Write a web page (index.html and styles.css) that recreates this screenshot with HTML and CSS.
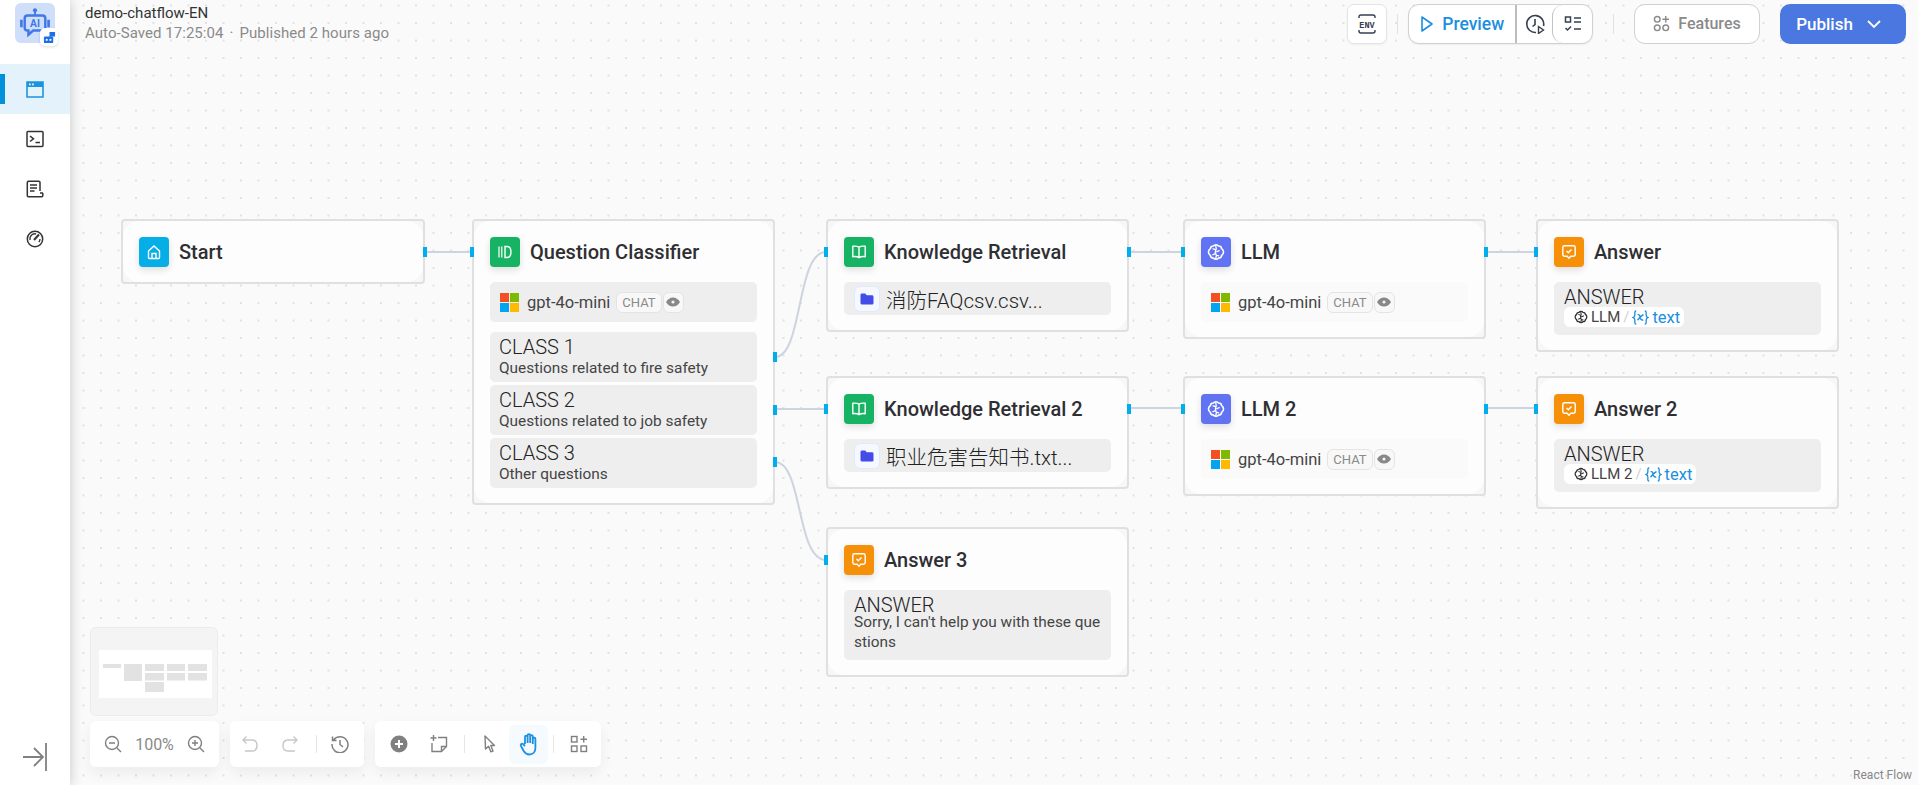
FILE: index.html
```html
<!DOCTYPE html>
<html lang="en">
<head>
    <meta charset="UTF-8">
    <meta name="viewport" content="width=device-width, initial-scale=1.0">
    <title>demo-chatflow-EN</title>
    <link rel="stylesheet" href="styles.css">
</head>
<body>
    <!-- Shared icons -->
    <svg class="icon-defs" xmlns="http://www.w3.org/2000/svg">
        <symbol id="i-ms" viewBox="0 0 19 19">
            <rect width="9" height="9" fill="#f25022"/>
            <rect x="10" width="9" height="9" fill="#7fba00"/>
            <rect y="10" width="9" height="9" fill="#00a4ef"/>
            <rect x="10" y="10" width="9" height="9" fill="#ffb900"/>
        </symbol>
        <symbol id="i-eye" viewBox="0 0 16 16">
            <path d="M1 8c1.800-3 4.200-4.500 7-4.500S13.200 5 15 8c-1.800 3-4.200 4.500-7 4.500S2.800 11 1 8z" fill="#888"/>
            <circle cx="8" cy="8" r="1.600" fill="#f4f4f4"/>
        </symbol>
        <symbol id="i-brain" viewBox="0 0 16 16">
            <path d="M8 1.500c-1 0-1.800.4-2.300 1.100C4.300 2.600 3.100 3.600 3 5 1.900 5.700 1.300 6.700 1.300 8s.6 2.300 1.700 3c.1 1.400 1.300 2.400 2.700 2.400.5.7 1.300 1.100 2.300 1.100s1.800-.4 2.300-1.100c1.400 0 2.600-1 2.700-2.400 1.100-.7 1.700-1.700 1.700-3s-.6-2.300-1.700-3c-.1-1.400-1.300-2.400-2.700-2.400C9.800 1.900 9 1.500 8 1.500z" fill="none" stroke="currentColor" stroke-width="1.400"/>
            <path d="M8 1.800c-.8 1.500.8 2.700 0 4.200s-1 2.500 0 4-.6 2.800 0 4.200M8 6.200L5 5M7.600 9.500L4.800 10.500M8.300 8l2.900-1.500M8.300 11l2.500.5" fill="none" stroke="currentColor" stroke-width="1.200"/>
        </symbol>
        <symbol id="i-book" viewBox="0 0 16 16">
            <path d="M8 3.200C6.500 2.300 4 2 1.800 2.300v10.400C4 12.400 6.500 12.700 8 13.700c1.500-1 4-1.300 6.200-1V2.300C12 2 9.500 2.300 8 3.200zM8 3.200v10.500" fill="none" stroke="#fff" stroke-width="1.400" stroke-linejoin="round"/>
        </symbol>
        <symbol id="i-answer" viewBox="0 0 16 16">
            <path d="M3.500 1.800h9c1 0 1.700.7 1.700 1.700v7c0 1-.7 1.700-1.700 1.700h-2.700L8 14.200 6.200 12.200H3.500c-1 0-1.700-.7-1.700-1.700v-7c0-1 .7-1.700 1.700-1.700z" fill="none" stroke="#fff" stroke-width="1.400"/>
            <path d="M5.500 7l1.800 1.800L10.500 5.500" fill="none" stroke="#fff" stroke-width="1.500"/>
        </symbol>
        <symbol id="i-folder" viewBox="0 0 16 16">
            <path d="M1.500 4c0-1 .7-1.500 1.500-1.500h3.200l1.500 1.700h5.300c.9 0 1.500.6 1.500 1.500V12c0 1-.7 1.500-1.500 1.500H3c-.9 0-1.500-.6-1.500-1.500z" fill="#444ce7"/>
        </symbol>
        <symbol id="i-var" viewBox="0 0 18 16">
            <path d="M4.500 1C2.500 1 3 3 3 5s-.3 2.600-1.800 3c1.500.4 1.800 1 1.800 3s-.5 4 1.500 4M13.500 1c2 0 1.500 2 1.500 4s.3 2.600 1.800 3c-1.500.4-1.800 1-1.800 3s.5 4-1.500 4" fill="none" stroke="#1c8fe0" stroke-width="1.400"/>
            <path d="M6 5c1.700-.5 2.300.7 2.700 2.800s1.100 3.500 3.300 2.700M12.200 5c-1.700 0-3.500 3-6.400 5.800" fill="none" stroke="#1c8fe0" stroke-width="1.500"/>
        </symbol>
    </svg>

    <div class="app">
        <aside class="sidebar">
            <div class="logo">
                <svg class="logo-bot" viewBox="0 0 32 32">
                    <circle cx="16" cy="2.500" r="2.200" fill="#3f78e8"/>
                    <path d="M16 4v4" stroke="#3f78e8" stroke-width="2"/>
                    <path d="M8 8h16c2 0 3 1 3 3v10c0 2-1 3-3 3H14l-5 4.500V24H8c-2 0-3-1-3-3V11c0-2 1-3 3-3z" fill="none" stroke="#3f78e8" stroke-width="2.600"/>
                    <path d="M1.500 12.500v8M30.500 12.500v8" stroke="#3f78e8" stroke-width="2.800"/>
                    <text x="16" y="20.500" text-anchor="middle" class="logo-ai">AI</text>
                </svg>
                <span class="logo-badge">
                    <svg viewBox="0 0 14 14" width="13" height="13">
                        <path d="M7 1h6v5H9L7 7z" fill="#1c6fe8"/>
                        <rect x="1" y="6" width="10" height="7" rx="1" fill="#1c6fe8"/>
                        <rect x="3" y="8.500" width="2" height="2" fill="#fff"/>
                        <rect x="7" y="8.500" width="2" height="2" fill="#fff"/>
                    </svg>
                </span>
            </div>
            <nav class="side-nav">
                <a class="side-item active">
                    <svg viewBox="0 0 18 18" width="18" height="18">
                        <path d="M1 2h16v15H1z" fill="none" stroke="#1c95e0" stroke-width="1.600"/>
                        <path d="M1 2h16v5H1z" fill="#1c95e0"/>
                        <rect x="3" y="3.500" width="1.800" height="1.800" fill="#e3f2fb"/>
                        <rect x="6" y="3.500" width="1.800" height="1.800" fill="#e3f2fb"/>
                    </svg>
                </a>
                <a class="side-item">
                    <svg viewBox="0 0 18 18" width="18" height="18">
                        <rect x="1" y="1.500" width="16" height="15" rx="1" fill="none" stroke="#333" stroke-width="1.500"/>
                        <path d="M4 6l3.500 2.800L4 11.500M9.500 12.500h4.500" fill="none" stroke="#333" stroke-width="1.500"/>
                    </svg>
                </a>
                <a class="side-item">
                    <svg viewBox="0 0 18 18" width="18" height="18">
                        <path d="M14 11V2.500C14 1.800 13.500 1.300 12.800 1.300H2.500c-.7 0-1.200.5-1.200 1.200v13.300c0 .6.500 1 1 1h13.500c.7 0 1-.6 1-1.200V13M14 13h3" fill="none" stroke="#333" stroke-width="1.500"/>
                        <path d="M4 5h7M4 8h7M4 11h4.500" stroke="#333" stroke-width="1.500"/>
                    </svg>
                </a>
                <a class="side-item">
                    <svg viewBox="0 0 18 18" width="18" height="18">
                        <circle cx="9" cy="9" r="7.700" fill="none" stroke="#333" stroke-width="1.500"/>
                        <path d="M4 10a5 5 0 0 1 6-6" fill="none" stroke="#333" stroke-width="1.500"/>
                        <path d="M8 10l5-5.500" stroke="#333" stroke-width="2"/>
                        <path d="M14 9a5 5 0 0 1-1.200 3.200" fill="none" stroke="#333" stroke-width="1.300"/>
                    </svg>
                </a>
            </nav>
            <button class="collapse">
                <svg viewBox="0 0 26 30" width="26" height="30">
                    <path d="M1 15h19M12 6l9 9-9 9M24 1v28" fill="none" stroke="#808080" stroke-width="1.800"/>
                </svg>
            </button>
        </aside>

        <main class="canvas">
            <header class="topbar">
                <div class="app-title">
                    <div class="app-name">demo-chatflow-EN</div>
                    <div class="app-status">Auto-Saved 17:25:04<span class="dot">·</span>Published 2 hours ago</div>
                </div>
                <button class="btn btn-env">
                    <svg viewBox="0 0 24 24" width="24" height="24">
                        <path d="M4 6V5c0-1 .7-2 2-2h12c1.300 0 2 1 2 2v1M4 18v1c0 1 .7 2 2 2h12c1.300 0 2-1 2-2v-1" fill="none" stroke="#354052" stroke-width="1.400"/>
                        <text x="12" y="15.500" text-anchor="middle" class="env-label">ENV</text>
                    </svg>
                </button>
                <span class="top-sep"></span>
                <div class="preview-group">
                    <button class="preview-btn">
                        <svg viewBox="0 0 14 18" width="14" height="18">
                            <path d="M2 2l10 7-10 7z" fill="none" stroke="#1c8fe0" stroke-width="1.600" stroke-linejoin="round"/>
                        </svg>
                        Preview
                    </button>
                    <button class="history-btn">
                        <svg viewBox="0 0 20 20" width="20" height="20">
                            <path d="M11 18.500a8.500 8.500 0 1 1 7.500-6.500" fill="none" stroke="#354052" stroke-width="1.600"/>
                            <path d="M10 5v5.500l-2.500 2" fill="none" stroke="#354052" stroke-width="1.600"/>
                            <path d="M13.500 12.500l5 3.500-5 3.500z" fill="none" stroke="#354052" stroke-width="1.400"/>
                        </svg>
                    </button>
                    <button class="check-btn">
                        <svg viewBox="0 0 18 18" width="18" height="18">
                            <rect x="1.500" y="2" width="5" height="5" fill="none" stroke="#354052" stroke-width="1.500"/>
                            <path d="M1.500 13l2 2 3.500-3.500" fill="none" stroke="#354052" stroke-width="1.500"/>
                            <path d="M10 3h7M10 7h7M10 14h7" stroke="#354052" stroke-width="1.500"/>
                        </svg>
                    </button>
                </div>
                <span class="top-sep top-sep-wide"></span>
                <button class="btn btn-features">
                    <svg viewBox="0 0 18 18" width="17" height="17">
                        <circle cx="4.500" cy="4.500" r="3" fill="none" stroke="#8a8a8a" stroke-width="1.500"/>
                        <circle cx="4.500" cy="13.500" r="3" fill="none" stroke="#8a8a8a" stroke-width="1.500"/>
                        <circle cx="13.500" cy="13.500" r="3" fill="none" stroke="#8a8a8a" stroke-width="1.500"/>
                        <path d="M13.500 1v7M10 4.500h7" stroke="#8a8a8a" stroke-width="1.500"/>
                    </svg>
                    Features
                </button>
                <button class="btn btn-publish">
                    Publish
                    <svg viewBox="0 0 16 16" width="16" height="16">
                        <path d="M2 5l6 6 6-6" fill="none" stroke="#fff" stroke-width="1.800"/>
                    </svg>
                </button>
            </header>

            <!-- Edges between the nodes -->
            <svg class="edges" viewBox="0 0 1848 785">
                <path d="M355 252H402"/>
                <path d="M705 357C733 357 726 252 756 252"/>
                <path d="M705 409H756"/>
                <path d="M705 462C733 462 726 560 756 560"/>
                <path d="M1059 252H1113"/>
                <path d="M1059 408H1113"/>
                <path d="M1416 252H1466"/>
                <path d="M1416 408H1466"/>
            </svg>

            <!-- Start -->
            <section class="node node-start">
                <div class="node-inner">
                    <div class="node-head">
                        <span class="node-icon icon-blue">
                            <svg viewBox="0 0 16 16" width="16" height="16">
                                <path d="M2.500 7L8 2l5.500 5v6.500c0 .6-.4 1-1 1h-9c-.6 0-1-.4-1-1z" fill="none" stroke="#fff" stroke-width="1.400"/>
                                <path d="M6 14.500V9.500h4v5" fill="none" stroke="#fff" stroke-width="1.400"/>
                            </svg>
                        </span>
                        <h3>Start</h3>
                    </div>
                </div>
                <i class="handle handle-right handle-top"></i>
            </section>

            <!-- Question Classifier -->
            <section class="node node-qc">
                <div class="node-inner">
                    <div class="node-head">
                        <span class="node-icon icon-green">
                            <svg viewBox="0 0 16 16" width="16" height="16">
                                <path d="M2 2.500v11M4.800 2.500v11" stroke="#fff" stroke-width="1.200"/>
                                <path d="M8 2.500h2c2.500 0 4 2 4 5.500s-1.500 5.500-4 5.500H8z" fill="none" stroke="#fff" stroke-width="1.400"/>
                            </svg>
                        </span>
                        <h3>Question Classifier</h3>
                    </div>
                    <div class="pill pill-model">
                        <svg class="ms-logo"><use href="#i-ms"/></svg>
                        <span class="model-name">gpt-4o-mini</span>
                        <span class="tag">CHAT</span>
                        <span class="tag tag-eye"><svg width="16" height="16"><use href="#i-eye"/></svg></span>
                    </div>
                    <div class="class-list">
                        <div class="pill pill-text">
                            <div class="pill-label">CLASS 1</div>
                            <div class="pill-desc">Questions related to fire safety</div>
                        </div>
                        <div class="pill pill-text">
                            <div class="pill-label">CLASS 2</div>
                            <div class="pill-desc">Questions related to job safety</div>
                        </div>
                        <div class="pill pill-text">
                            <div class="pill-label">CLASS 3</div>
                            <div class="pill-desc">Other questions</div>
                        </div>
                    </div>
                </div>
                <i class="handle handle-left handle-top"></i>
                <i class="handle handle-right handle-c1"></i>
                <i class="handle handle-right handle-c2"></i>
                <i class="handle handle-right handle-c3"></i>
            </section>

            <!-- Knowledge Retrieval -->
            <section class="node node-kr">
                <div class="node-inner">
                    <div class="node-head">
                        <span class="node-icon icon-green"><svg width="16" height="16"><use href="#i-book"/></svg></span>
                        <h3>Knowledge Retrieval</h3>
                    </div>
                    <div class="pill pill-kb">
                        <span class="folder-tag"><svg width="16" height="16"><use href="#i-folder"/></svg></span>
                        <span class="kb-name">消防FAQcsv.csv...</span>
                    </div>
                </div>
                <i class="handle handle-left handle-top"></i>
                <i class="handle handle-right handle-top"></i>
            </section>

            <section class="node node-kr2">
                <div class="node-inner">
                    <div class="node-head">
                        <span class="node-icon icon-green"><svg width="16" height="16"><use href="#i-book"/></svg></span>
                        <h3>Knowledge Retrieval 2</h3>
                    </div>
                    <div class="pill pill-kb">
                        <span class="folder-tag"><svg width="16" height="16"><use href="#i-folder"/></svg></span>
                        <span class="kb-name">职业危害告知书.txt...</span>
                    </div>
                </div>
                <i class="handle handle-left handle-top"></i>
                <i class="handle handle-right handle-top"></i>
            </section>

            <!-- LLM -->
            <section class="node node-llm">
                <div class="node-inner">
                    <div class="node-head">
                        <span class="node-icon icon-indigo"><svg class="brain-white" width="18" height="18"><use href="#i-brain"/></svg></span>
                        <h3>LLM</h3>
                    </div>
                    <div class="pill pill-model pill-light">
                        <svg class="ms-logo"><use href="#i-ms"/></svg>
                        <span class="model-name">gpt-4o-mini</span>
                        <span class="tag">CHAT</span>
                        <span class="tag tag-eye"><svg width="16" height="16"><use href="#i-eye"/></svg></span>
                    </div>
                </div>
                <i class="handle handle-left handle-top"></i>
                <i class="handle handle-right handle-top"></i>
            </section>

            <section class="node node-llm2">
                <div class="node-inner">
                    <div class="node-head">
                        <span class="node-icon icon-indigo"><svg class="brain-white" width="18" height="18"><use href="#i-brain"/></svg></span>
                        <h3>LLM 2</h3>
                    </div>
                    <div class="pill pill-model pill-light">
                        <svg class="ms-logo"><use href="#i-ms"/></svg>
                        <span class="model-name">gpt-4o-mini</span>
                        <span class="tag">CHAT</span>
                        <span class="tag tag-eye"><svg width="16" height="16"><use href="#i-eye"/></svg></span>
                    </div>
                </div>
                <i class="handle handle-left handle-top"></i>
                <i class="handle handle-right handle-top"></i>
            </section>

            <!-- Answer -->
            <section class="node node-ans">
                <div class="node-inner">
                    <div class="node-head">
                        <span class="node-icon icon-orange"><svg width="16" height="16"><use href="#i-answer"/></svg></span>
                        <h3>Answer</h3>
                    </div>
                    <div class="pill pill-text pill-answer">
                        <div class="pill-label">ANSWER</div>
                        <span class="var-chip">
                            <svg class="brain-dark" width="14" height="14"><use href="#i-brain"/></svg>
                            <span class="var-node">LLM</span>
                            <span class="var-slash">/</span>
                            <svg width="17" height="15"><use href="#i-var"/></svg>
                            <span class="var-name">text</span>
                        </span>
                    </div>
                </div>
                <i class="handle handle-left handle-top"></i>
            </section>

            <section class="node node-ans2">
                <div class="node-inner">
                    <div class="node-head">
                        <span class="node-icon icon-orange"><svg width="16" height="16"><use href="#i-answer"/></svg></span>
                        <h3>Answer 2</h3>
                    </div>
                    <div class="pill pill-text pill-answer">
                        <div class="pill-label">ANSWER</div>
                        <span class="var-chip">
                            <svg class="brain-dark" width="14" height="14"><use href="#i-brain"/></svg>
                            <span class="var-node">LLM 2</span>
                            <span class="var-slash">/</span>
                            <svg width="17" height="15"><use href="#i-var"/></svg>
                            <span class="var-name">text</span>
                        </span>
                    </div>
                </div>
                <i class="handle handle-left handle-top"></i>
            </section>

            <section class="node node-ans3">
                <div class="node-inner">
                    <div class="node-head">
                        <span class="node-icon icon-orange"><svg width="16" height="16"><use href="#i-answer"/></svg></span>
                        <h3>Answer 3</h3>
                    </div>
                    <div class="pill pill-text pill-answer">
                        <div class="pill-label">ANSWER</div>
                        <div class="pill-desc pill-wrap">Sorry, I can't help you with these questions</div>
                    </div>
                </div>
                <i class="handle handle-left handle-top"></i>
            </section>

            <!-- Bottom left tools -->
            <div class="bottom-tools">
                <div class="minimap">
                    <svg viewBox="0 0 113 48" width="113" height="48">
                        <rect width="113" height="48" fill="#fff"/>
                        <g fill="#e2e2e2">
                            <rect x="4" y="14" width="18" height="4"/>
                            <rect x="25" y="14" width="18" height="17"/>
                            <rect x="46" y="14" width="19" height="7"/>
                            <rect x="46" y="23" width="19" height="7.500"/>
                            <rect x="46" y="32" width="19" height="10"/>
                            <rect x="68" y="14" width="18" height="7"/>
                            <rect x="68" y="23" width="18" height="7.500"/>
                            <rect x="89" y="14" width="19" height="7"/>
                            <rect x="89" y="23" width="19" height="7.500"/>
                        </g>
                    </svg>
                </div>
                <div class="tool-row">
                    <div class="panel panel-zoom">
                        <svg viewBox="0 0 18 18" width="18" height="18">
                            <circle cx="8" cy="8" r="6.500" fill="none" stroke="#808080" stroke-width="1.400"/>
                            <path d="M5 8h6M13 13l4 4" stroke="#808080" stroke-width="1.400"/>
                        </svg>
                        <span class="zoom-value">100%</span>
                        <svg viewBox="0 0 18 18" width="18" height="18">
                            <circle cx="8" cy="8" r="6.500" fill="none" stroke="#808080" stroke-width="1.400"/>
                            <path d="M5 8h6M8 5v6M13 13l4 4" stroke="#808080" stroke-width="1.400"/>
                        </svg>
                    </div>
                    <div class="panel panel-undo">
                        <svg viewBox="0 0 18 18" width="18" height="18">
                            <path d="M5.500 1.500L2 5l3.500 3.500M2 5h9c3 0 5 2.200 5 5.500S14 16 11 16H4" fill="none" stroke="#c8c8c8" stroke-width="1.400"/>
                        </svg>
                        <svg viewBox="0 0 18 18" width="18" height="18">
                            <path d="M12.500 1.500L16 5l-3.500 3.500M16 5H7c-3 0-5 2.200-5 5.500S4 16 7 16h7" fill="none" stroke="#c8c8c8" stroke-width="1.400"/>
                        </svg>
                        <span class="panel-sep"></span>
                        <svg viewBox="0 0 18 18" width="18" height="18">
                            <path d="M2.500 5A8 8 0 1 1 1 9M1.500 1.500V5.500H5.500" fill="none" stroke="#808080" stroke-width="1.500"/>
                            <path d="M9 5v4.500l3 2.500" fill="none" stroke="#808080" stroke-width="1.500"/>
                        </svg>
                    </div>
                    <div class="panel panel-tools">
                        <svg viewBox="0 0 18 18" width="18" height="18">
                            <circle cx="9" cy="9" r="8.500" fill="#808080"/>
                            <path d="M5 9h8M9 5v8" stroke="#fff" stroke-width="2"/>
                        </svg>
                        <svg viewBox="0 0 18 18" width="18" height="18">
                            <path d="M8 2.500h8.500v9L11.500 16.500H2V8M11.500 16.500v-5h5" fill="none" stroke="#808080" stroke-width="1.400"/>
                            <path d="M3.500 0v6M.5 3h6" stroke="#808080" stroke-width="1.400"/>
                        </svg>
                        <span class="panel-sep"></span>
                        <span class="tool-slot">
                            <svg viewBox="0 0 18 18" width="18" height="18">
                                <path d="M4 1l9.500 9.500H9.800l2.200 5.500-2.200.8-2.200-5.500L4.500 14z" fill="none" stroke="#808080" stroke-width="1.400" stroke-linejoin="round"/>
                            </svg>
                        </span>
                        <span class="tool-slot tool-active">
                            <svg viewBox="0 0 20 24" width="20" height="24">
                                <path d="M6 12V5a1.300 1.300 0 0 1 2.600 0v6V3.500a1.300 1.300 0 0 1 2.600 0V11V4.500a1.300 1.300 0 0 1 2.600 0V12V7a1.300 1.300 0 0 1 2.600 0v9c0 4-2.500 6.500-6 6.500-3 0-4.500-1.500-6-4L2 14c-1-1.500.8-3 2-2l2 2" fill="none" stroke="#1c8fe0" stroke-width="1.800"/>
                            </svg>
                        </span>
                        <span class="panel-sep"></span>
                        <svg viewBox="0 0 18 18" width="18" height="18">
                            <rect x="1.500" y="1.500" width="5.500" height="5.500" fill="none" stroke="#808080" stroke-width="1.400"/>
                            <rect x="1.500" y="11" width="5.500" height="5.500" fill="none" stroke="#808080" stroke-width="1.400"/>
                            <rect x="11" y="11" width="5.500" height="5.500" fill="none" stroke="#808080" stroke-width="1.400"/>
                            <path d="M13.700 1v6.500M10.500 4.200H17" stroke="#808080" stroke-width="1.400"/>
                        </svg>
                    </div>
                </div>
            </div>

            <a class="rf-credit">React Flow</a>
        </main>
    </div>
</body>
</html>
```

FILE: styles.css
```css
* {
    box-sizing: border-box;
}
body {
    margin: 0;
    padding: 0;
    font-family: Roboto, "Noto Sans CJK SC", sans-serif;
    color: #333;
    overflow: hidden;
}
button {
    font-family: inherit;
    cursor: pointer;
}
.icon-defs {
    position: absolute;
    width: 0;
    height: 0;
}
.app {
    display: flex;
    width: 1918px;
    height: 785px;
}

/* Sidebar */
.sidebar {
    position: relative;
    z-index: 5;
    width: 70px;
    flex: none;
    display: flex;
    flex-direction: column;
    align-items: stretch;
    background: #fff;
    box-shadow: 0 0 12px rgba(0, 0, 0, 0.22);
}
.logo {
    position: relative;
    width: 40px;
    height: 40px;
    margin: 3px 0 0 15px;
    border-radius: 6px;
    background: #cfdffa;
    display: flex;
    align-items: center;
    justify-content: center;
}
.logo-bot {
    width: 30px;
    height: 30px;
}
.logo-ai {
    font: 700 11px Roboto, sans-serif;
    fill: #3f78e8;
}
.logo-badge {
    position: absolute;
    right: -3px;
    bottom: -3px;
    width: 18px;
    height: 18px;
    border-radius: 5px;
    background: #fff;
    display: flex;
    align-items: center;
    justify-content: center;
    box-shadow: 0 1px 3px rgba(0, 0, 0, 0.15);
}
.side-nav {
    margin-top: 21px;
}
.side-item {
    position: relative;
    height: 50px;
    display: flex;
    align-items: center;
    justify-content: center;
}
.side-item.active {
    background: #e3f2fb;
}
.side-item.active::before {
    content: "";
    position: absolute;
    left: 0;
    top: 10px;
    width: 5px;
    height: 30px;
    background: #0091da;
}
.collapse {
    margin: auto 0 13px 22px;
    padding: 0;
    width: 26px;
    height: 30px;
    border: none;
    background: none;
}

/* Canvas */
.canvas {
    position: relative;
    flex: 1;
    background-color: #fafafb;
    background-image: radial-gradient(circle, #e0e1e3 1px, transparent 1.3px);
    background-size: 17.5px 17.5px;
    background-position: 4.75px 49.25px;
    overflow: hidden;
}
.topbar {
    position: relative;
    z-index: 3;
    display: flex;
    align-items: center;
    height: 47px;
    padding: 0 12px 0 15px;
}
.app-title {
    margin-right: auto;
    align-self: flex-start;
    padding-top: 3px;
}
.app-name {
    font-size: 15px;
    line-height: 20px;
    color: #333;
}
.app-status {
    font-size: 15px;
    line-height: 21px;
    letter-spacing: 0.05px;
    color: #8a8a8a;
}
.dot {
    margin: 0 6px;
}
.btn {
    height: 40px;
    border-radius: 10px;
    display: flex;
    align-items: center;
    justify-content: center;
    background: #fff;
    border: 1px solid #d6d6d6;
}
.btn-env {
    width: 40px;
    padding: 0;
    border-color: #e4e4e4;
    border-radius: 7px;
    box-shadow: 0 1px 2px rgba(0, 0, 0, 0.05);
}
.env-label {
    font: 700 8.500px "Liberation Mono", monospace;
    fill: #354052;
}
.top-sep {
    width: 1px;
    height: 20px;
    margin: 0 10px;
    background: #e2e2e2;
}
.top-sep-wide {
    margin: 0 20px;
}
.preview-group {
    display: flex;
    width: 185px;
    height: 40px;
    border: 1px solid #d0d0d0;
    border-radius: 11px;
    background: #fff;
    box-shadow: 0 1px 2px rgba(0, 0, 0, 0.06);
}
.preview-group button {
    padding: 0;
    border: none;
    background: none;
    display: flex;
    align-items: center;
    justify-content: center;
}
.preview-btn {
    width: 109px;
    gap: 8px;
    font-size: 17.500px;
    font-weight: 500;
    color: #1c8fe0;
    border-right: 2px solid #bdbdbd !important;
}
.history-btn {
    width: 35px;
}
.preview-group .check-btn {
    width: 40px;
    border-left: 1px solid #c4c4c4;
    border-radius: 11px;
}
.btn-features {
    width: 126px;
    gap: 8px;
    font-size: 16px;
    font-weight: 500;
    color: #8a8a8a;
    border-color: #d0d0d0;
    border-radius: 11px;
}
.btn-publish {
    width: 126px;
    margin-left: 20px;
    padding: 0 8px 0 0;
    gap: 13px;
    border: none;
    font-size: 17px;
    font-weight: 500;
    color: #fff;
    background: #4a78e0;
}

/* Edges */
.edges {
    position: absolute;
    left: 0;
    top: 0;
    width: 1848px;
    height: 785px;
}
.edges path {
    fill: none;
    stroke: #cdd3df;
    stroke-width: 2;
}

/* Nodes, placed on the free canvas */
.node {
    position: absolute;
    width: 303px;
    border: 2px solid #e0e0e2;
    border-radius: 4px;
    background: #f7f7f8;
}
.node-inner {
    padding: 16px 16px 15px;
    border-radius: 16px;
    background: #fdfdfd;
}
.node-start { left: 51px; top: 219px; width: 304px; }
.node-qc { left: 402px; top: 219px; }
.node-kr { left: 756px; top: 219px; }
.node-kr2 { left: 756px; top: 376px; }
.node-llm { left: 1113px; top: 219px; }
.node-llm2 { left: 1113px; top: 376px; }
.node-ans { left: 1466px; top: 219px; }
.node-ans2 { left: 1466px; top: 376px; }
.node-ans3 { left: 756px; top: 527px; }

.node-head {
    display: flex;
    align-items: center;
    gap: 10px;
    height: 30px;
}
.node-head h3 {
    margin: 0;
    font-size: 20px;
    font-weight: 500;
    color: #2f2f33;
}
.node-icon {
    width: 30px;
    height: 30px;
    flex: none;
    border-radius: 4px;
    display: flex;
    align-items: center;
    justify-content: center;
    box-shadow: 0 3px 7px rgba(0, 0, 0, 0.12);
}
.icon-blue { background: #06aee8; }
.icon-green { background: #16b364; }
.icon-indigo { background: #6172f3; }
.icon-orange { background: #f79009; }
.brain-white { color: #fff; }
.brain-dark { color: #2f2f33; }

.pill {
    margin-top: 15px;
    border-radius: 5px;
    background: #eeeeef;
    padding: 0 10px;
}
.pill-model {
    height: 40px;
    display: flex;
    align-items: center;
}
.pill-light {
    background: #fafafa;
}
.ms-logo {
    width: 19px;
    height: 19px;
    flex: none;
}
.model-name {
    margin-left: 8px;
    font-size: 16.500px;
    color: #444;
}
.tag {
    height: 21px;
    margin-left: 6px;
    padding: 0 5px;
    border: 1px solid #e4e4e4;
    border-radius: 6px;
    background: #f8f8f8;
    font-size: 13px;
    color: #8a8a8a;
    display: flex;
    align-items: center;
}
.tag-eye {
    width: 21px;
    margin-left: 1px;
    padding: 0;
    justify-content: center;
}
.class-list {
    margin-top: 10px;
    display: flex;
    flex-direction: column;
    gap: 3px;
}
.class-list .pill {
    margin-top: 0;
    padding-left: 9px;
}
.pill-text {
    height: 50px;
    padding-top: 4px;
}
.pill-label {
    font-size: 20px;
    font-weight: 300;
    line-height: 22px;
    color: #222;
}
.pill-desc {
    font-size: 15.400px;
    line-height: 20px;
    color: #444;
}
.pill-kb {
    height: 33px;
    display: flex;
    align-items: center;
    gap: 6px;
}
.folder-tag {
    width: 26px;
    height: 26px;
    border: 1px solid #e0eaff;
    border-radius: 6px;
    background: #f5f8ff;
    display: flex;
    align-items: center;
    justify-content: center;
}
.kb-name {
    font-size: 20.500px;
    font-weight: 300;
    color: #222;
}
.pill-answer {
    height: 53px;
    padding-top: 7px;
}
.pill-answer .pill-label {
    line-height: 16px;
    margin-bottom: -1px;
}
.pill-wrap {
    word-break: break-all;
}
.node-ans3 .pill-answer {
    height: 70px;
}
.var-chip {
    display: inline-flex;
    align-items: center;
    height: 20px;
    margin-top: 3px;
    padding: 0 4px 0 10px;
    gap: 3px;
    border-radius: 6px;
    background: #fff;
    font-size: 15px;
    color: #444;
    vertical-align: top;
}
.var-slash {
    color: #d0d0d0;
}
.var-name {
    font-size: 16.500px;
    color: #1c8fe0;
}
.handle {
    position: absolute;
    width: 4px;
    height: 10px;
    background: #00aeec;
}
.handle-left { left: -4px; }
.handle-right { right: -4px; }
.handle-top { top: 26px; }
.handle-c1 { top: 131px; }
.handle-c2 { top: 184px; }
.handle-c3 { top: 236px; }

/* Bottom tools */
.bottom-tools {
    position: absolute;
    left: 20px;
    bottom: 18px;
    display: flex;
    flex-direction: column;
    gap: 5px;
}
.minimap {
    width: 128px;
    height: 89px;
    padding: 22px 8px 0;
    border: 1px solid #ececec;
    border-radius: 6px;
    background: #f4f4f5;
}
.minimap svg {
    display: block;
}
.tool-row {
    display: flex;
    gap: 11px;
}
.panel {
    height: 46px;
    border-radius: 6px;
    background: #fff;
    display: flex;
    align-items: center;
    box-shadow: 0 6px 14px rgba(0, 0, 0, 0.06);
}
.panel-zoom {
    width: 129px;
    padding: 0 14px;
    justify-content: space-between;
}
.zoom-value {
    font-size: 16px;
    color: #8a8a8a;
}
.panel-undo {
    width: 134px;
    padding-left: 11px;
    gap: 22px;
}
.panel-undo .panel-sep {
    margin: 0 -8px 0 -5px;
}
.panel-tools {
    width: 226px;
    padding-left: 15px;
    gap: 22px;
}
.panel-tools .panel-sep {
    margin: 0 -6px;
}
.panel-tools .tool-slot {
    margin: 0 -11px;
}
.panel-sep {
    width: 1px;
    height: 18px;
    background: #e6e6e6;
}
.tool-slot {
    width: 39px;
    height: 39px;
    border-radius: 6px;
    display: flex;
    align-items: center;
    justify-content: center;
}
.tool-active {
    background: #f5fafe;
}
.rf-credit {
    position: absolute;
    right: 6px;
    bottom: 3px;
    font-size: 12px;
    color: #888;
}
```
